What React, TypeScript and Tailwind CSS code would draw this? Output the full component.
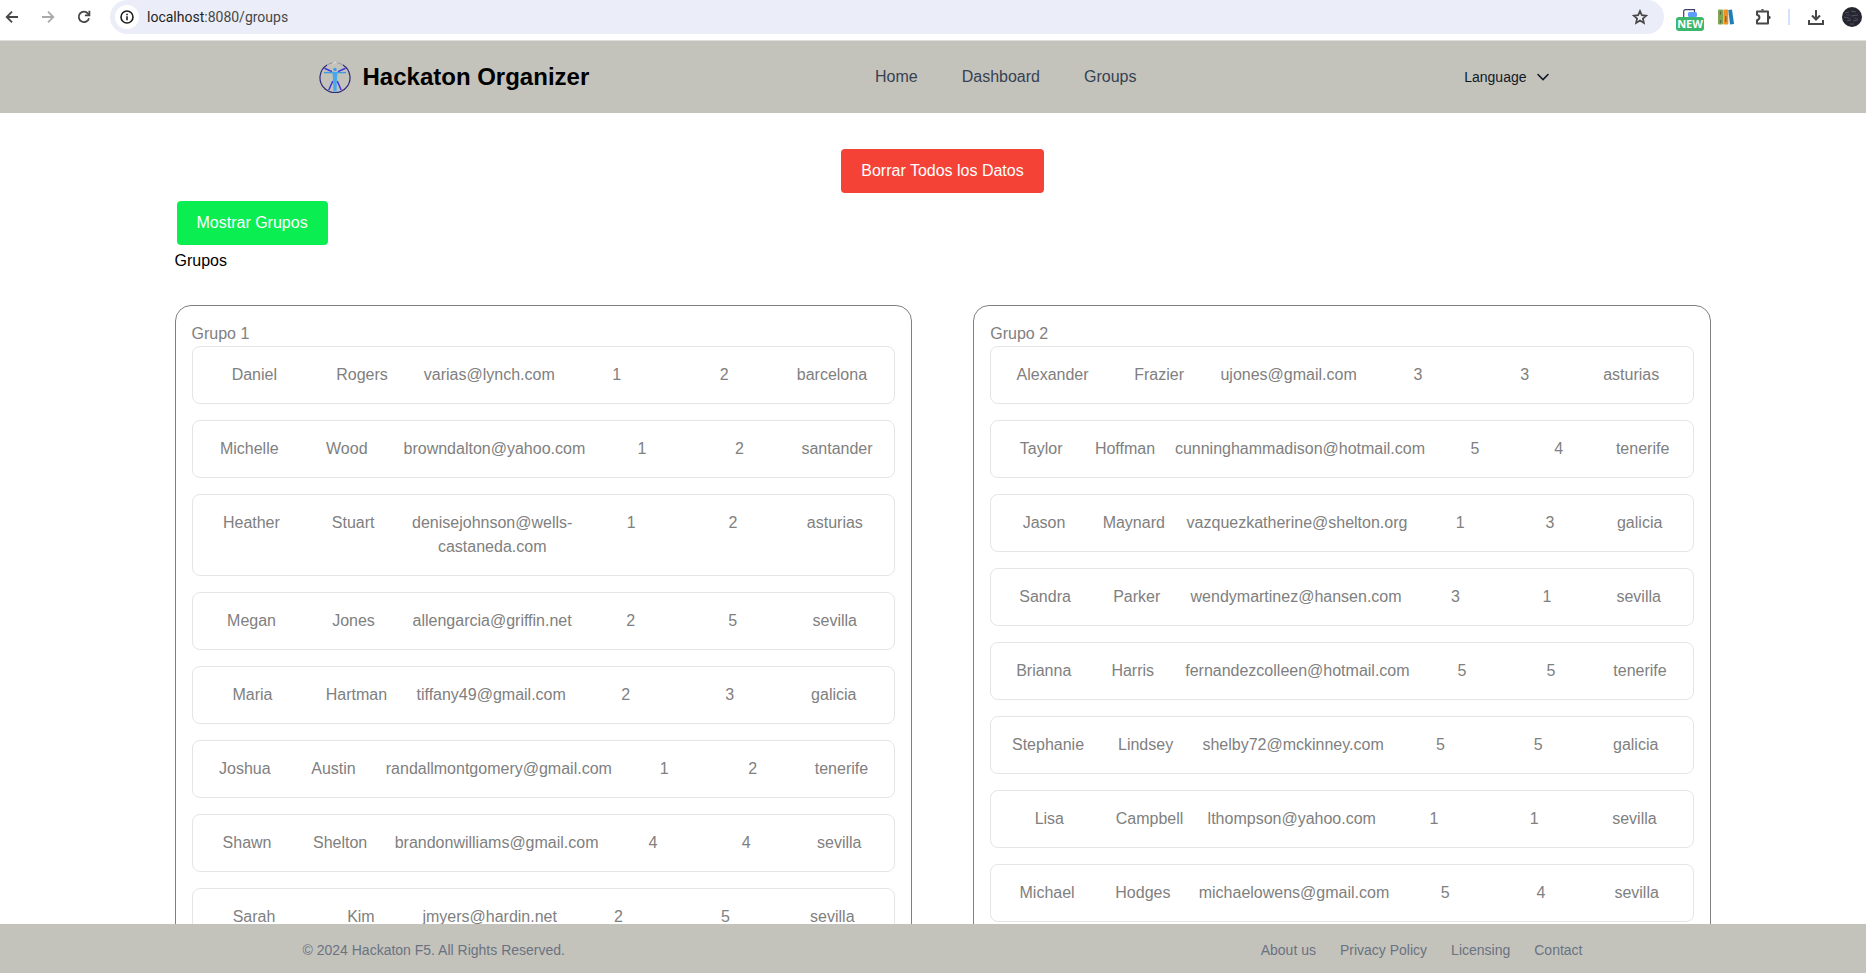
import React from "react";

type Member = {
  first: string;
  last: string;
  email: string;
  backend: number;
  frontend: number;
  city: string;
};

type Group = { name: string; members: Member[] };

const member = (
  first: string,
  last: string,
  email: string,
  backend: number,
  frontend: number,
  city: string,
): Member => ({ first, last, email, backend, frontend, city });

const groups: Group[] = [
  {
    name: "Grupo 1",
    members: [
      member("Daniel", "Rogers", "varias@lynch.com", 1, 2, "barcelona"),
      member("Michelle", "Wood", "browndalton@yahoo.com", 1, 2, "santander"),
      member("Heather", "Stuart", "denisejohnson@wells-castaneda.com", 1, 2, "asturias"),
      member("Megan", "Jones", "allengarcia@griffin.net", 2, 5, "sevilla"),
      member("Maria", "Hartman", "tiffany49@gmail.com", 2, 3, "galicia"),
      member("Joshua", "Austin", "randallmontgomery@gmail.com", 1, 2, "tenerife"),
      member("Shawn", "Shelton", "brandonwilliams@gmail.com", 4, 4, "sevilla"),
      member("Sarah", "Kim", "jmyers@hardin.net", 2, 5, "sevilla"),
    ],
  },
  {
    name: "Grupo 2",
    members: [
      member("Alexander", "Frazier", "ujones@gmail.com", 3, 3, "asturias"),
      member("Taylor", "Hoffman", "cunninghammadison@hotmail.com", 5, 4, "tenerife"),
      member("Jason", "Maynard", "vazquezkatherine@shelton.org", 1, 3, "galicia"),
      member("Sandra", "Parker", "wendymartinez@hansen.com", 3, 1, "sevilla"),
      member("Brianna", "Harris", "fernandezcolleen@hotmail.com", 5, 5, "tenerife"),
      member("Stephanie", "Lindsey", "shelby72@mckinney.com", 5, 5, "galicia"),
      member("Lisa", "Campbell", "lthompson@yahoo.com", 1, 1, "sevilla"),
      member("Michael", "Hodges", "michaelowens@gmail.com", 5, 4, "sevilla"),
    ],
  },
];

function BrowserBar() {
  return (
    <div className="flex h-[41px] shrink-0 items-start border-b border-[#dcdfdc] bg-white pr-1 text-[#474747]">
      <div className="flex h-[34px] items-center gap-5 pl-1">
        <button type="button" aria-label="Back" className="size-4">
          <svg viewBox="0 0 16 16" className="size-4" fill="none" stroke="#474747" strokeWidth="1.8">
            <path d="M14 8H3M8 2.7L2.7 8L8 13.3" />
          </svg>
        </button>
        <button type="button" aria-label="Forward" className="size-4">
          <svg viewBox="0 0 16 16" className="size-4" fill="none" stroke="#a9a9a9" strokeWidth="1.8">
            <path d="M2 8h11M8 2.7L13.3 8L8 13.3" />
          </svg>
        </button>
        <button type="button" aria-label="Reload" className="size-4">
          <svg viewBox="0 0 16 16" className="size-4" fill="none" stroke="#474747" strokeWidth="1.8">
            <path d="M13 9.2A5.2 5.2 0 1 1 12 4.6L13.2 6" />
            <path d="M13.4 1.8V6.3H8.9" />
          </svg>
        </button>
      </div>
      <div className="ml-[18px] flex h-[34px] flex-1 items-center rounded-full bg-[#ebeef8] pl-[5px] pr-4">
        <button
          type="button"
          aria-label="Site information"
          className="flex size-6 items-center justify-center rounded-full bg-white"
        >
          <svg viewBox="0 0 14 14" className="size-[14px]" fill="none" stroke="#1f1f1f" strokeWidth="1.6">
            <circle cx="7" cy="7" r="6" />
            <path d="M7 6.2V10.2M7 3.7V5.2" />
          </svg>
        </button>
        <div className="ml-2 flex-1 font-['Roboto',sans-serif] text-[14px] leading-5 text-[#1f1f1f]">
          localhost<span className="text-[#474747]">:8080/groups</span>
        </div>
        <button type="button" aria-label="Bookmark" className="size-4">
          <svg viewBox="0 0 16 16" className="size-4" fill="none" stroke="#474747" strokeWidth="1.7">
            <path d="M8 2L9.8 6.2L14.3 6.6L10.9 9.5L11.9 13.9L8 11.6L4.1 13.9L5.1 9.5L1.7 6.6L6.2 6.2Z" />
          </svg>
        </button>
      </div>
      <div className="ml-3 flex h-[34px] items-center">
        <button type="button" aria-label="New extension" className="flex w-7 flex-col items-center pt-[6px]">
          <svg viewBox="0 0 14 8" className="h-2 w-[14px]">
            <path d="M0.7 8V2.5Q0.7 0.7 2.5 0.7H11.5V3" fill="none" stroke="#3c4064" strokeWidth="1.2" />
            <rect x="5" y="3" width="9" height="5" rx="1.5" fill="#5c9dff" />
          </svg>
          <span className="flex h-[14px] w-7 items-center justify-center rounded-[3px] bg-[#3cb66b] font-['Noto_Sans',sans-serif] text-[11px] font-bold leading-[14px] text-white">
            NEW
          </span>
        </button>
        <button type="button" aria-label="Library" className="ml-[14px] size-4">
          <svg viewBox="0 0 16 16" className="size-4">
            <rect x="0" y="0.5" width="5" height="15" rx="1" fill="#7fa650" />
            <rect x="5.3" y="0.5" width="5" height="15" rx="1" fill="#f09125" />
            <path d="M10.3 1L14 0.5L16 15L12 15.5Z" fill="#1d7fb8" />
            <path d="M2.5 2.5v3M2.5 11v3M7.8 7v6" stroke="#5c6650" strokeWidth="1.2" />
          </svg>
        </button>
        <button type="button" aria-label="Extensions" className="ml-5 size-[18px]">
          <svg viewBox="0 0 18 18" className="size-[18px]" fill="none" stroke="#474747" strokeWidth="2">
            <path d="M3 3.5H14V15.5H3V12.2Q5.4 11.6 5.4 9.5T3 6.8Z" strokeLinejoin="round" />
            <path d="M6.8 2.6A1.7 1.7 0 0 1 10.2 2.6ZM15 7.8A1.7 1.7 0 0 1 15 11.2Z" fill="#474747" stroke="none" />
          </svg>
        </button>
        <span className="ml-4 h-4 w-[2px] bg-[#d3e3fd]" />
        <button type="button" aria-label="Downloads" className="ml-[18px] size-4">
          <svg viewBox="0 0 16 16" className="size-4" fill="none" stroke="#474747" strokeWidth="2">
            <path d="M8 1V10M4 6.5L8 10.5L12 6.5M1 11V15H15V11" />
          </svg>
        </button>
        <button type="button" aria-label="Profile" className="ml-[18px] size-5">
          <svg viewBox="0 0 20 20" className="size-5">
            <circle cx="10" cy="10" r="10" fill="#25262f" />
            <path
              d="M3 6l4-1M9 4l5 1M2 10l5 1M9 9l7-1M5 14l4-1M11 14l5-1M8 17l4 0"
              stroke="#4d5560"
              strokeWidth="1"
            />
            <path d="M4 8l4 0M12 11l4 1M6 12l3 0" stroke="#4b3c66" strokeWidth="1" />
          </svg>
        </button>
      </div>
    </div>
  );
}

function Logo() {
  return (
    <svg viewBox="0 0 32 32" className="size-8" fill="none">
      <path d="M8 4A15 15 0 1 0 24 4" stroke="#2e2a78" strokeWidth="1.2" />
      <path d="M8 4Q11 2.2 13.5 1.8M24 4Q21 2.2 18.5 1.8" stroke="#8d8ba5" strokeWidth="0.9" />
      <path d="M13.5 3.5L17 0.8" stroke="#e4e4e0" strokeWidth="1" />
      <path d="M5.5 7.2L13 10.6M26.5 7.2L19 10.6M13.8 20L9.8 29M18.2 20L22.2 29" stroke="#3a35e0" strokeWidth="1.5" />
      <path d="M5 11.6H27" stroke="#4399de" strokeWidth="1.4" />
      <path d="M13.4 11h5.2l-0.8 9L17.6 30.5h-3.2L14.2 20Z" fill="#45a9ea" />
      <circle cx="16" cy="8.4" r="1.7" fill="#3d9be4" />
    </svg>
  );
}

function Header() {
  return (
    <header className="bg-[#c4c3bb] pl-[19px]">
      <div className="mx-auto flex max-w-7xl items-center justify-between px-4 py-5">
        <a href="#home" className="flex items-center gap-3">
          <Logo />
          <span className="text-2xl font-bold leading-8 text-black">Hackaton Organizer</span>
        </a>
        <nav className="flex gap-11 pr-[26px] text-base text-gray-700">
          <a href="#home">Home</a>
          <a href="#dashboard">Dashboard</a>
          <a href="#groups">Groups</a>
        </nav>
        <button type="button" className="flex items-center gap-2 px-4 text-sm text-gray-900">
          Language
          <svg viewBox="0 0 16 16" className="size-4" fill="none" stroke="currentColor" strokeWidth="1.6">
            <path d="M3 5.5L8 10.5L13 5.5" strokeLinecap="round" />
          </svg>
        </button>
      </div>
    </header>
  );
}

function MemberRow({ data }: { data: Member }) {
  const cells = [data.first, data.last, data.email, data.backend, data.frontend, data.city];
  return (
    <li className="flex rounded-lg border border-[#e5e5e5] p-2 text-center">
      {cells.map((cell, i) => (
        <span key={i} className="flex-1 p-2">
          {cell}
        </span>
      ))}
    </li>
  );
}

function GroupCard({ group }: { group: Group }) {
  return (
    <section className="w-[48%] rounded-2xl border border-[#808080] p-4 text-[#808080]">
      <h2>{group.name}</h2>
      <ul className="flex flex-col gap-4">
        {group.members.map((m) => (
          <MemberRow key={m.email} data={m} />
        ))}
      </ul>
    </section>
  );
}

function Footer() {
  return (
    <footer className="shrink-0 bg-[#c4c3bb] pl-[19px] text-sm text-gray-500">
      <div className="mx-auto flex max-w-7xl justify-between pb-[13px] pt-4">
        <span>© 2024 Hackaton F5. All Rights Reserved.</span>
        <nav className="flex gap-6">
          <a href="#about">About us</a>
          <a href="#privacy">Privacy Policy</a>
          <a href="#licensing">Licensing</a>
          <a href="#contact">Contact</a>
        </nav>
      </div>
    </footer>
  );
}

export default function App() {
  return (
    <div className="flex h-screen flex-col bg-white font-['Liberation_Sans',Arial,sans-serif] text-base text-black">
      <BrowserBar />
      <div className="min-h-0 flex-1 overflow-y-auto [scrollbar-width:none]">
        <Header />
        <main className="pl-[19px]">
          <div className="mx-auto max-w-[1536px] pt-8">
            <div className="flex justify-center">
              <button type="button" className="mx-[2px] my-1 rounded bg-[#f44336] px-5 py-[10px] text-white">
                Borrar Todos los Datos
              </button>
            </div>
            <div className="flex">
              <button type="button" className="mx-[2px] my-1 rounded bg-[#0aee51] px-5 py-[10px] text-white">
                Mostrar Grupos
              </button>
            </div>
            <h1>Grupos</h1>
            <div className="flex justify-between py-8">
              {groups.map((g) => (
                <GroupCard key={g.name} group={g} />
              ))}
            </div>
          </div>
        </main>
      </div>
      <Footer />
    </div>
  );
}
